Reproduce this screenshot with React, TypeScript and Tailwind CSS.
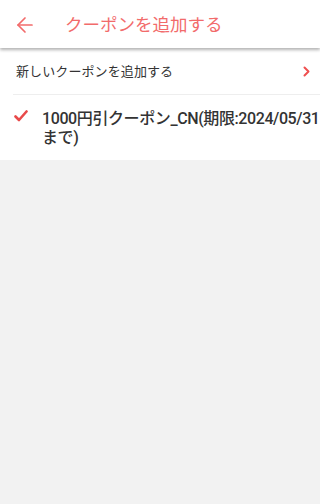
import { ArrowLeft } from 'lucide-react';

export default function App() {
  return (
    <div
      className="w-[320px] h-[504px] bg-[#f2f2f2] flex flex-col overflow-hidden"
      style={{ fontFamily: 'Roboto, "Noto Sans CJK JP", sans-serif' }}
    >
      {/* header */}
      <div className="h-[48px] shrink-0 bg-white flex items-center shadow-[0_2px_3px_rgba(0,0,0,0.3)] relative z-10">
        <ArrowLeft className="w-[24px] h-[24px] ml-[13px] mt-[1px] text-[#f26b6b]" strokeWidth={1.7} />
        <span className="ml-[28px] mt-[3px] text-[17.5px] text-[#f26b6b] leading-none">クーポンを追加する</span>
      </div>

      <div className="bg-white">
        <div className="h-[46px] flex items-center justify-between pl-[16px] pr-[10px]">
          <span className="mt-[1px] text-[13px] tracking-[0.1px] text-[#333333]">新しいクーポンを追加する</span>
          <svg width="7" height="11" viewBox="0 0 7 11" fill="none">
            <path d="M1.5 1.5 5.5 5.5 1.5 9.5" stroke="#ef4f4f" strokeWidth="2" strokeLinecap="round" strokeLinejoin="round" />
          </svg>
        </div>
        <div className="h-px bg-[#eeeeee] ml-[13px]" />
        <div className="flex items-start pt-[14px] pb-[13px] pl-[14px]">
          <svg width="14" height="12" viewBox="0 0 14 12" fill="none" className="shrink-0 mt-[1px]">
            <path d="M1.5 6.5 5 10 12.5 1.5" stroke="#e84a4a" strokeWidth="2.6" strokeLinecap="round" strokeLinejoin="round" />
          </svg>
          <p className="ml-[14px] text-[16px] font-medium text-[#333333] leading-[19px] tracking-[-0.4px] whitespace-nowrap overflow-hidden">
            1000円引クーポン_CN(期限:2024/05/31
            <br />
            まで)
          </p>
        </div>
      </div>
    </div>
  );
}
